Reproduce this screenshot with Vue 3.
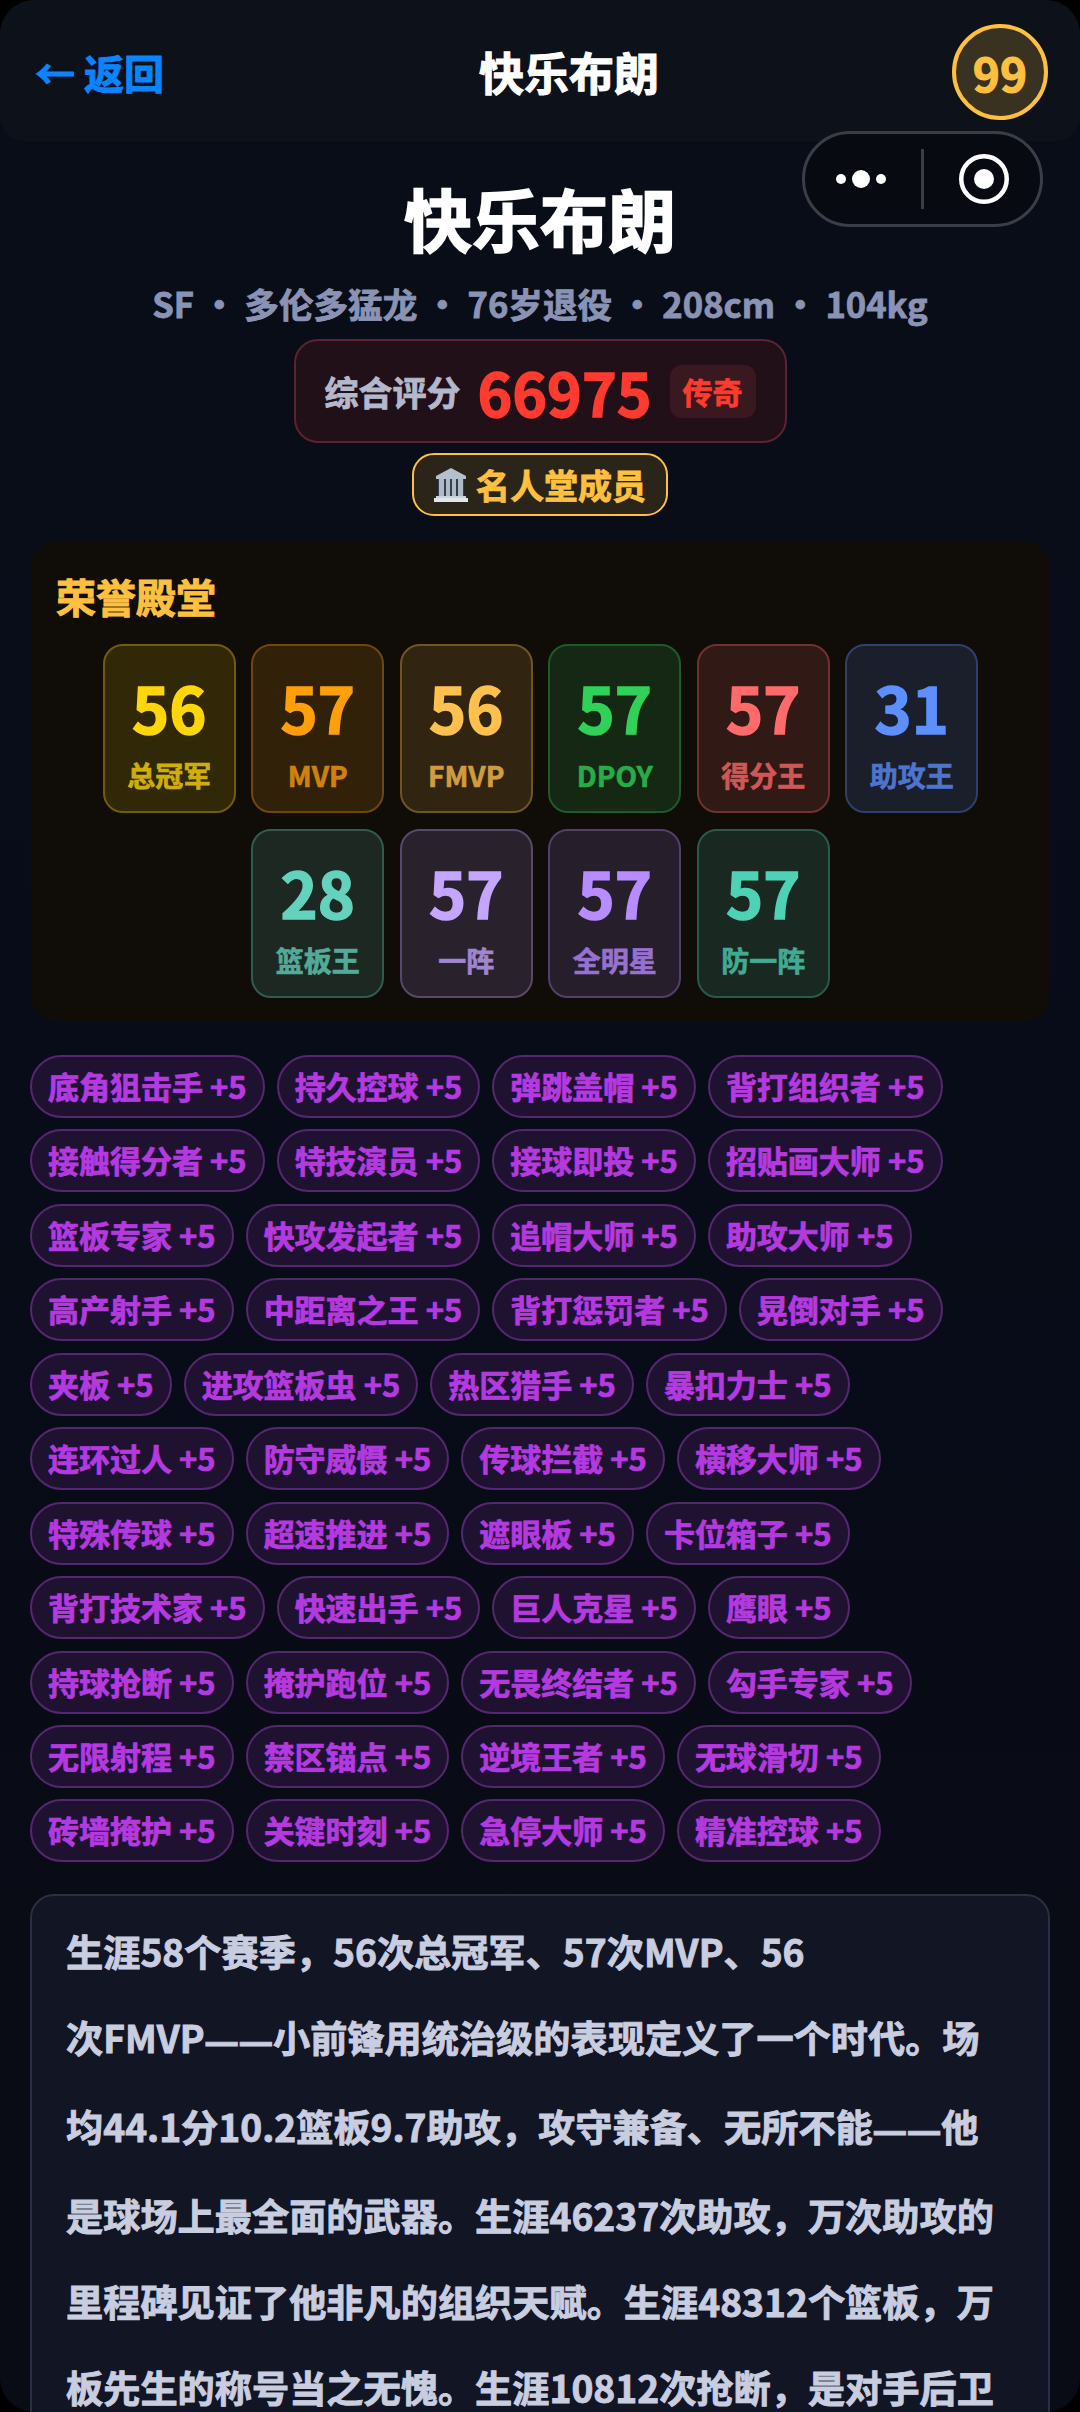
<script setup>
const honors = [
  [
    { n: 56, l: '总冠军', c: '#ffd60a' },
    { n: 57, l: 'MVP', c: '#ff9f0a' },
    { n: 56, l: 'FMVP', c: '#ffc04d' },
    { n: 57, l: 'DPOY', c: '#30d158' },
    { n: 57, l: '得分王', c: '#ff6b6b' },
    { n: 31, l: '助攻王', c: '#5e8fff' },
  ],
  [
    { n: 28, l: '篮板王', c: '#64d2bc' },
    { n: 57, l: '一阵', c: '#c4a5ff' },
    { n: 57, l: '全明星', c: '#b78cff' },
    { n: 57, l: '防一阵', c: '#4fd1b5' },
  ],
]
const tags = [
  '底角狙击手', '持久控球', '弹跳盖帽', '背打组织者',
  '接触得分者', '特技演员', '接球即投', '招贴画大师',
  '篮板专家', '快攻发起者', '追帽大师', '助攻大师',
  '高产射手', '中距离之王', '背打惩罚者', '晃倒对手',
  '夹板', '进攻篮板虫', '热区猎手', '暴扣力士',
  '连环过人', '防守威慑', '传球拦截', '横移大师',
  '特殊传球', '超速推进', '遮眼板', '卡位箱子',
  '背打技术家', '快速出手', '巨人克星', '鹰眼',
  '持球抢断', '掩护跑位', '无畏终结者', '勾手专家',
  '无限射程', '禁区锚点', '逆境王者', '无球滑切',
  '砖墙掩护', '关键时刻', '急停大师', '精准控球',
]
const bio = [
  '生涯58个赛季，56次总冠军、57次MVP、56',
  '次FMVP——小前锋用统治级的表现定义了一个时代。场',
  '均44.1分10.2篮板9.7助攻，攻守兼备、无所不能——他',
  '是球场上最全面的武器。生涯46237次助攻，万次助攻的',
  '里程碑见证了他非凡的组织天赋。生涯48312个篮板，万',
  '板先生的称号当之无愧。生涯10812次抢断，是对手后卫',
].map((text) => text.split(/(——)/))
</script>

<template>
  <div class="page" lang="zh-CN">
    <header class="nav">
      <span class="back">← 返回</span>
      <span class="nav-title">快乐布朗</span>
      <span class="ovr">99</span>
    </header>

    <div class="capsule">
      <svg class="dots" width="50" height="18" viewBox="0 0 50 18">
        <circle cx="5" cy="9" r="5" fill="#fff" />
        <circle cx="25" cy="9" r="9" fill="#fff" />
        <circle cx="45" cy="9" r="5" fill="#fff" />
      </svg>
      <i class="sep"></i>
      <svg class="target" width="50" height="50" viewBox="0 0 50 50">
        <circle cx="25" cy="25" r="22.75" fill="none" stroke="#fff" stroke-width="4.5" />
        <circle cx="25" cy="25" r="10" fill="#fff" />
      </svg>
    </div>

    <section class="hero">
      <h1 class="name">快乐布朗</h1>
      <p class="meta">SF · 多伦多猛龙 · 76岁退役 · 208cm · 104kg</p>
      <div class="score">
        <span class="score-label">综合评分</span>
        <span class="score-num">66975</span>
        <span class="score-tier">传奇</span>
      </div>
      <div class="hof">
        <svg class="hof-icon" width="34" height="34" viewBox="0 0 34 34">
          <path d="M17 0 L32 8 V11 H2 V8 Z" fill="#b4c0cb" />
          <rect x="4" y="11" width="26" height="18" fill="#33404e" />
          <path d="M5 11h5v18H5zM12 11h4v18h-4zM18 11h4v18h-4zM24 11h5v18h-5z" fill="#aebbc7" />
          <rect x="2" y="28" width="30" height="2" fill="#c9d3dc" />
          <rect x="0" y="30" width="34" height="4" fill="#dfe6ec" />
        </svg>
        <span>名人堂成员</span>
      </div>
    </section>

    <section class="panel">
      <h2 class="panel-title">荣誉殿堂</h2>
      <div v-for="(row, i) in honors" :key="i" class="honor-row">
        <div
          v-for="h in row"
          :key="h.l"
          class="honor"
          :style="{ '--c': h.c }"
        >
          <span class="honor-num">{{ h.n }}</span>
          <span class="honor-label">{{ h.l }}</span>
        </div>
      </div>
    </section>

    <section class="tags">
      <span v-for="t in tags" :key="t" class="tag">{{ t }} +5</span>
    </section>

    <section class="bio">
      <span v-for="(parts, i) in bio" :key="i" class="bio-line"><template v-for="(p, j) in parts" :key="j"><span v-if="p === '——'" class="dash">{{ p }}</span><template v-else>{{ p }}</template></template></span>
    </section>
  </div>
</template>

<style>
html, body { margin: 0; background: #000; }
</style>

<style scoped>
.page {
  position: relative;
  height: 2412px;
  overflow: hidden;
  border-radius: 34px;
  background: linear-gradient(#080d18 20%, #070c18 50%, #090b15 80%);
  font-family: "Noto Sans CJK SC", "Noto Sans", sans-serif;
  font-weight: 700;
  color: #fff;
  display: flex;
  flex-direction: column;
  align-items: stretch;
}
.page > * { flex-shrink: 0; }
.page * { -webkit-text-stroke: 0.024em currentColor; }
.nav {
  height: 141px;
  box-sizing: border-box;
  padding: 2px 32px 0 35px;
  border-radius: 0 0 24px 24px;
  background: #0d111a;
  display: flex;
  align-items: center;
  justify-content: space-between;
}
.back { color: #0a84ff; font-size: 40px; line-height: 1; }
.nav-title {
  margin-left: 22px;
  font-size: 45px;
  line-height: 1;
}
.ovr {
  box-sizing: border-box;
  width: 96px;
  height: 96px;
  border-radius: 50%;
  border: 4px solid #ffc040;
  background: #3a3220;
  color: #ffc040;
  font-size: 46px;
  display: flex;
  align-items: center;
  justify-content: center;
}
.capsule {
  position: absolute;
  left: 802px;
  top: 131px;
  box-sizing: border-box;
  width: 241px;
  height: 96px;
  border-radius: 48px;
  border: 3px solid #3b3e46;
  background: #080a12;
  display: flex;
  align-items: center;
}
.dots { margin-left: 31px; }
.sep { width: 3px; height: 60px; background: #3b3e46; margin-left: 35px; }
.target { margin-left: 35px; }
.hero {
  display: flex;
  flex-direction: column;
  align-items: center;
}
.name { margin: 33px 0 0; font-size: 68px; line-height: 88px; font-weight: 700; }
.meta { margin: 16px 0 0; font-size: 34.6px; line-height: 50px; color: #8b93b5; white-space: nowrap; }
.score {
  margin-top: 11px;
  box-sizing: border-box;
  width: 493px;
  height: 104px;
  border-radius: 24px;
  border: 2px solid #5e2230;
  background: #221018;
  display: flex;
  align-items: center;
  justify-content: center;
}
.score-label { font-size: 34px; color: #b4b8cc; }
.score-num { font-size: 59px; color: #ff3b30; margin-left: 17px; line-height: 1; }
.score-tier {
  margin-left: 18px;
  width: 86px;
  height: 53px;
  border-radius: 12px;
  background: #3a1820;
  color: #ff3b30;
  font-size: 30px;
  display: flex;
  align-items: center;
  justify-content: center;
}
.hof {
  margin-top: 10px;
  box-sizing: border-box;
  width: 256px;
  height: 63px;
  border-radius: 22px;
  border: 2px solid #ffc040;
  background: #2a2518;
  color: #ffc040;
  font-size: 34px;
  display: flex;
  align-items: center;
  justify-content: center;
  gap: 8px;
}
.panel {
  margin: 26px 30px 0 31px;
  box-sizing: border-box;
  height: 479px;
  padding: 28px 25px 0;
  border-radius: 24px;
  background: #100c08;
}
.panel-title {
  margin: 0 0 22px;
  font-size: 40px;
  line-height: 52px;
  font-weight: 700;
  color: #ffc040;
}
.honor-row {
  display: flex;
  justify-content: center;
  gap: 15.5px;
  margin-bottom: 16px;
}
.honor {
  flex: none;
  box-sizing: border-box;
  width: 133px;
  height: 169px;
  border-radius: 20px;
  border: 2px solid color-mix(in srgb, var(--c) 40%, #100c08);
  background: color-mix(in srgb, var(--c) 14%, #100c08);
  display: flex;
  flex-direction: column;
  align-items: center;
}
.honor-num {
  margin-top: 21px;
  font-size: 63px;
  line-height: 80px;
  color: var(--c);
}
.honor-label {
  margin-top: 10px;
  font-size: 28px;
  line-height: 36px;
  color: color-mix(in srgb, var(--c) 80%, #100c08);
}
.tags {
  margin: 34px 30px 0;
  display: flex;
  flex-wrap: wrap;
  gap: 11.45px 12px;
}
.tag {
  box-sizing: border-box;
  height: 63px;
  padding: 0 16px;
  border-radius: 32px;
  border: 2px solid #55276f;
  background: #1f1230;
  color: #b43ae0;
  font-size: 31px;
  line-height: 58px;
  white-space: nowrap;
}
.bio {
  margin: 32px 30px 0;
  box-sizing: border-box;
  padding: 12px 34px 60px;
  border-radius: 24px;
  border: 2px solid #2a2f42;
  background: #111524;
  color: #c9cde0;
  font-size: 37.2px;
  line-height: 86px;
}
.bio-line { display: block; white-space: nowrap; }
.dash { font-family: "Noto Sans", sans-serif; font-size: 0.92em; }
</style>
